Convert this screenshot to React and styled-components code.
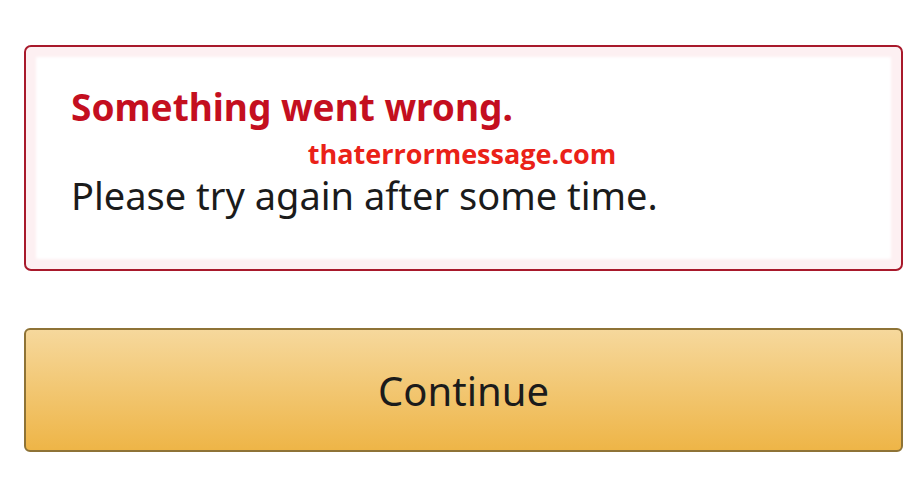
import React from "react";
import styled, { createGlobalStyle } from "styled-components";

const GlobalStyle = createGlobalStyle`
  body {
    margin: 0;
    background: #ffffff;
    font-family: "Noto Sans", "Open Sans", Arial, sans-serif;
  }
`;

const Page = styled.div`
  width: 920px;
  height: 478px;
  padding: 45px 17px 0 24px;
  box-sizing: border-box;
  display: flex;
  flex-direction: column;
  gap: 57px;
`;

const Alert = styled.div`
  height: 226px;
  box-sizing: border-box;
  border: 2px solid #a8192b;
  border-radius: 7px;
  box-shadow: inset 0 0 3px 10px #fdf0f2;
  padding: 37px 40px 0 45px;
  display: flex;
  flex-direction: column;
`;

const Heading = styled.h1`
  margin: 0;
  font-size: 37px;
  font-weight: 700;
  line-height: 46px;
  color: #c40f1f;
`;

const Watermark = styled.div`
  align-self: center;
  margin: 8px 0 0 -8px;
  font-family: "Open Sans", "Noto Sans", sans-serif;
  font-size: 27px;
  font-weight: 700;
  line-height: 32px;
  color: #ea2118;
`;

const Message = styled.p`
  margin: 2px 0 0;
  font-size: 38px;
  line-height: 46px;
  color: #1b1b1b;
`;

const Button = styled.button`
  height: 124px;
  border: 2px solid #8e7336;
  border-radius: 6px;
  background: linear-gradient(to bottom, #f6d89c, #eeb547);
  font-family: "Noto Sans", "Open Sans", sans-serif;
  font-size: 40px;
  color: #1b1b1b;
  cursor: pointer;
`;

export default function App() {
  return (
    <>
      <GlobalStyle />
      <Page>
        <Alert>
          <Heading>Something went wrong.</Heading>
          <Watermark>thaterrormessage.com</Watermark>
          <Message>Please try again after some time.</Message>
        </Alert>
        <Button>Continue</Button>
      </Page>
    </>
  );
}
